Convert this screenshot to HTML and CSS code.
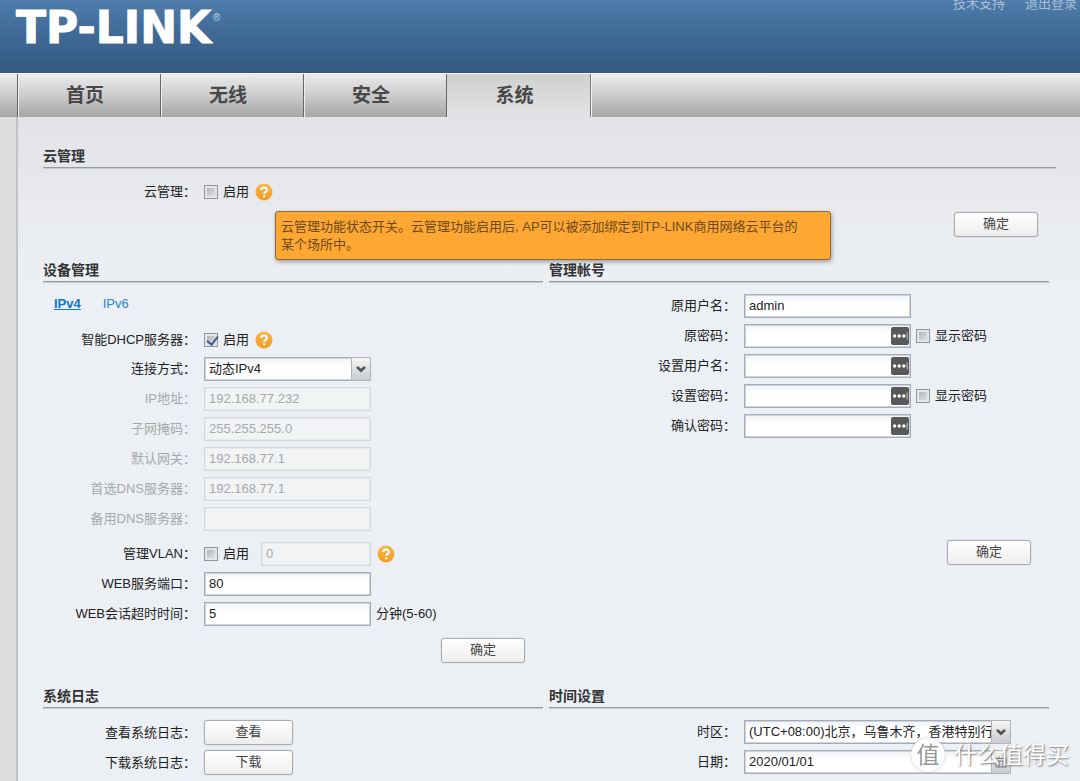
FILE: index.html
```html
<!DOCTYPE html>
<html lang="zh-CN">
<head>
<meta charset="utf-8">
<title>TP-LINK</title>
<link rel="stylesheet" href="styles.css">
</head>
<body>
<svg class="defs" width="0" height="0" aria-hidden="true">
  <defs>
    <linearGradient id="orange" x1="0" y1="0" x2="0" y2="1"><stop offset="0" stop-color="#f8b84e"/><stop offset="1" stop-color="#f59a1c"/></linearGradient>
    <symbol id="help" viewBox="0 0 18 18"><circle cx="9" cy="9" r="8.5" fill="url(#orange)"/><path d="M6.2 7.1C6.2 3.6 11.9 3.7 11.9 6.9C11.9 8.9 9.2 8.8 9.2 11" fill="none" stroke="#fff" stroke-width="2"/><rect x="8.1" y="12.2" width="2.2" height="2.2" fill="#fff"/></symbol>
    <symbol id="arrow" viewBox="0 0 10 7"><path d="M0.5 0.5H2.5L5 2.8L7.5 0.5H9.5V2.2L5 6.5L0.5 2.2Z" fill="#505358"/></symbol>
    <symbol id="key" viewBox="0 0 18 18"><rect width="18" height="18" rx="2" fill="#58585a"/><circle cx="3.6" cy="9" r="1.7" fill="#fff"/><circle cx="8.2" cy="9" r="1.7" fill="#fff"/><circle cx="12.8" cy="9" r="1.7" fill="#fff"/><path d="M16.2 5.5V12.5" stroke="#aaa" stroke-width="1.4"/></symbol>
  </defs>
</svg>
<header class="header">
  <div class="logo">TP-LINK<sup>®</sup></div>
  <div class="links"><a href="#">技术支持</a><a href="#">退出登录</a></div>
</header>
<nav class="nav">
  <a href="#">首页</a><a href="#">无线</a><a href="#">安全</a><a href="#" class="active">系统</a>
</nav>
<main class="content">
  <section class="cloud">
    <h2>云管理</h2>
    <div class="row check-row first-check">
      <span class="label">云管理：</span>
      <div class="controls"><input type="checkbox" id="cloud"><label for="cloud">启用</label>
        <span class="help-wrap"><svg class="help"><use href="#help"/></svg><span class="tip" role="tooltip">云管理功能状态开关。云管理功能启用后, AP可以被添加绑定到TP-LINK商用网络云平台的<br>某个场所中。</span></span></div>
    </div>
    <button class="btn confirm cloud-ok">确定</button>
  </section>

  <div class="columns">
    <section>
      <h2>设备管理</h2>
      <div class="ip-tabs"><a href="#" class="current">IPv4</a><a href="#">IPv6</a></div>
      <div class="rows">
        <div class="row check-row"><span class="label">智能DHCP服务器：</span><div class="controls"><input type="checkbox" id="dhcp" checked><label for="dhcp">启用</label><svg class="help"><use href="#help"/></svg></div></div>
        <div class="row"><label class="label" for="mode">连接方式：</label><div class="controls"><span class="select"><select id="mode"><option>动态IPv4</option></select><span class="drop"><svg><use href="#arrow"/></svg></span></span></div></div>
        <div class="row off"><label class="label" for="ip">IP地址：</label><div class="controls"><input class="field" id="ip" value="192.168.77.232" disabled></div></div>
        <div class="row off"><label class="label" for="mask">子网掩码：</label><div class="controls"><input class="field" id="mask" value="255.255.255.0" disabled></div></div>
        <div class="row off"><label class="label" for="gw">默认网关：</label><div class="controls"><input class="field" id="gw" value="192.168.77.1" disabled></div></div>
        <div class="row off"><label class="label" for="dns1">首选DNS服务器：</label><div class="controls"><input class="field" id="dns1" value="192.168.77.1" disabled></div></div>
        <div class="row off"><label class="label" for="dns2">备用DNS服务器：</label><div class="controls"><input class="field" id="dns2" disabled></div></div>
        <div class="row vlan"><span class="label">管理VLAN：</span><div class="controls"><input type="checkbox" id="vlan"><label for="vlan">启用</label><input class="field short" value="0" aria-label="VLAN" disabled><svg class="help"><use href="#help"/></svg></div></div>
        <div class="row"><label class="label" for="port">WEB服务端口：</label><div class="controls"><input class="field" id="port" value="80"></div></div>
        <div class="row"><label class="label" for="timeout">WEB会话超时时间：</label><div class="controls"><input class="field" id="timeout" value="5"><span class="unit">分钟(5-60)</span></div></div>
      </div>
      <button class="btn confirm device-ok">确定</button>
    </section>

    <section class="wide">
      <h2>管理帐号</h2>
      <div class="rows">
        <div class="row"><label class="label" for="user">原用户名：</label><div class="controls"><input class="field" id="user" value="admin"></div></div>
        <div class="row"><label class="label" for="pw">原密码：</label><div class="controls"><span class="secret"><input class="field" type="password" id="pw"><svg><use href="#key"/></svg></span><input type="checkbox" id="show1"><label for="show1">显示密码</label></div></div>
        <div class="row"><label class="label" for="newuser">设置用户名：</label><div class="controls"><span class="secret"><input class="field" id="newuser"><svg><use href="#key"/></svg></span></div></div>
        <div class="row"><label class="label" for="newpw">设置密码：</label><div class="controls"><span class="secret"><input class="field" type="password" id="newpw"><svg><use href="#key"/></svg></span><input type="checkbox" id="show2"><label for="show2">显示密码</label></div></div>
        <div class="row"><label class="label" for="again">确认密码：</label><div class="controls"><span class="secret"><input class="field" type="password" id="again"><svg><use href="#key"/></svg></span></div></div>
      </div>
      <button class="btn confirm account-ok">确定</button>
    </section>

    <section>
      <h2>系统日志</h2>
      <div class="rows">
        <div class="row"><span class="label">查看系统日志：</span><div class="controls"><button class="btn log">查看</button></div></div>
        <div class="row"><span class="label">下载系统日志：</span><div class="controls"><button class="btn log">下载</button></div></div>
      </div>
    </section>

    <section class="wide">
      <h2>时间设置</h2>
      <div class="rows">
        <div class="row"><label class="label" for="zone">时区：</label><div class="controls"><span class="select long"><select id="zone"><option>(UTC+08:00)北京，乌鲁木齐，香港特别行政区</option></select><span class="drop"><svg><use href="#arrow"/></svg></span></span></div></div>
        <div class="row"><label class="label" for="date">日期：</label><div class="controls"><span class="select long"><input class="field" id="date" value="2020/01/01"><span class="drop"><svg class="cal" viewBox="0 0 12 12"><path d="M1 2.5H11V11H1ZM1 5H11M4 0.5V3M8 0.5V3M4 5V11M8 5V11" fill="none" stroke="#777"/></svg></span></span></div></div>
      </div>
    </section>
  </div>
</main>
<div class="watermark"><span class="badge">值</span><span>什么值得买</span></div>
</body>
</html>
```
FILE: styles.css
```css
* { box-sizing: border-box; }
html, body { height: 100%; }
body {
  margin: 0;
  display: flex;
  flex-direction: column;
  position: relative;
  overflow: hidden;
  background: #dcdddf;
  color: #222;
  font: 13px/18px "Liberation Sans", "Noto Sans CJK SC", sans-serif;
}
input, select, button { font: inherit; color: inherit; margin: 0; }
.defs { position: absolute; }

.header {
  flex: none;
  height: 73px;
  display: flex;
  justify-content: space-between;
  align-items: flex-start;
  padding: 0 3px 0 16px;
  background: linear-gradient(#4f7dad, #406a97 45%, #34597f);
}
.logo {
  display: flex;
  padding-top: 4px;
  color: #fff;
  font: bold 44px/48px "DejaVu Sans", sans-serif;
  -webkit-text-stroke: 1px #fff;
}
.logo sup {
  font: 10px/28px "Liberation Sans", sans-serif;
  color: #c5d5e5;
  -webkit-text-stroke: 0;
  margin-left: 2px;
}
.links { display: flex; gap: 20px; line-height: 8px; }
.links a { color: #a9bfd5; text-decoration: none; }

.nav {
  flex: none;
  height: 44px;
  display: flex;
  padding-left: 17px;
  border-top: 1px solid #f8f8f8;
  background: linear-gradient(#ebebeb, #cfcfcf 45%, #a6a6a6);
}
.nav a {
  width: 143px;
  padding-right: 8px;
  border-left: 1px solid #666;
  box-shadow: inset 1px 0 #eee;
  color: #484848;
  font-size: 19px;
  font-weight: bold;
  line-height: 43px;
  text-align: center;
  text-decoration: none;
}
.nav .active {
  width: 145px;
  border-right: 1px solid #777;
  box-shadow: 1px 0 #f5f5f5;
  background: linear-gradient(#d0d0cf, #e3e3e7);
}

.content {
  flex: 1;
  margin-left: 16px;
  padding: 28px 24px 0 25px;
  border-left: 2px solid #c1c3c7;
  background: linear-gradient(#e3e3e7, #ecf0f4 170px);
}
h2 {
  margin: 0;
  border-bottom: 1px solid #999ba0;
  box-shadow: 0 1px #c8cacf;
  color: #333;
  font-size: 14px;
  line-height: 22px;
}
.cloud { display: flex; flex-direction: column; padding-bottom: 22px; }
.columns {
  display: grid;
  grid-template-columns: 1fr 1fr;
  gap: 22px 6px;
  padding-right: 7px;
}
.rows { display: grid; gap: 6px; margin-top: 12px; }
.row {
  display: grid;
  grid-template-columns: 153px 1fr;
  gap: 8px;
  align-items: center;
  height: 24px;
}
.wide .row { grid-template-columns: 187px 1fr; }
.check-row { height: 22px; }
.first-check { margin-top: 13px; }
.label { text-align: right; white-space: nowrap; }
.off .label { color: #a5a8ab; }
.controls { display: flex; align-items: center; }
.vlan { margin-top: 5px; }

.ip-tabs { display: flex; gap: 22px; padding: 13px 0 4px 11px; }
.ip-tabs a { color: #2b82d2; text-decoration: none; }
.ip-tabs .current { color: #1272cc; font-weight: bold; text-decoration: underline; }

.field, select {
  width: 167px;
  height: 24px;
  padding: 0 4px 1px;
  border: 1px solid #a6abb8;
  border-radius: 0;
  background: linear-gradient(#f1f3f6, #fff 9px);
  box-shadow: inset 0 0 0 1px #d0d4dc;
}
.field:disabled {
  border-color: #d5d9de;
  background: #f1f3f5;
  box-shadow: inset 0 0 0 1px #e6e9ec;
  color: #a5a8ab;
}
.short { width: 110px; margin-left: 12px; }
.unit { margin-left: 5px; }
input[type="checkbox"] {
  appearance: none;
  width: 14px;
  height: 14px;
  margin-right: 5px;
  border: 1px solid #92959a;
  background: linear-gradient(135deg, #a6a9ad, #ececee);
  box-shadow: inset 0 0 0 2px #e3e6e9;
}
input[type="checkbox"]:checked::after {
  content: "";
  display: block;
  width: 5px;
  height: 9px;
  margin: 0 0 0 4px;
  border: solid #3f5f98;
  border-width: 0 2px 2px 0;
  transform: rotate(38deg);
}
.help { width: 18px; height: 18px; margin-left: 6px; display: block; }
.help-wrap { position: relative; }
.tip {
  position: absolute;
  top: 28px;
  left: 26px;
  z-index: 1;
  width: 556px;
  padding: 6px 5px 5px;
  border: 1px solid #8c6a3c;
  border-radius: 3px;
  background: #fea733;
  box-shadow: 1px 2px 4px #0005;
  color: #6b4a1c;
}

.select { position: relative; width: 167px; height: 24px; }
.select select, .select .field { width: 100%; padding-right: 19px; }
.long { width: 267px; }
select { appearance: none; }
.drop {
  position: absolute;
  top: 0;
  right: 0;
  width: 20px;
  height: 24px;
  display: flex;
  align-items: center;
  justify-content: center;
  border: 1px solid #b0b3bb;
  background: linear-gradient(#f5f5f5, #c9cbcf);
  pointer-events: none;
}
.drop svg { width: 10px; height: 7px; }
.drop .cal { width: 12px; height: 12px; }
.secret { position: relative; height: 24px; margin-right: 5px; }
.secret .field { padding-right: 22px; }
.secret svg { position: absolute; top: 3px; right: 2px; width: 18px; height: 18px; }

.btn {
  display: block;
  width: 84px;
  height: 25px;
  padding: 0 0 2px;
  border: 1px solid #a9abae;
  border-radius: 3px;
  background: linear-gradient(#fff, #ededee);
  box-shadow: 0 0 1px #999;
  color: #444;
}
.log { width: 89px; }
.confirm { margin-left: auto; margin-right: 18px; }
.cloud-ok { margin-top: 9px; }
.device-ok { margin-top: 12px; }
.account-ok { margin-top: 102px; }

.watermark {
  position: absolute;
  right: 11px;
  bottom: 9px;
  display: flex;
  align-items: center;
  gap: 9px;
  color: #fff;
  font-size: 23px;
  line-height: 34px;
  text-shadow: 1px 1px 2px #777;
  pointer-events: none;
}
.badge {
  width: 34px;
  border-radius: 50%;
  background: #fff;
  box-shadow: 0 0 2px #aaa;
  color: #999;
  text-align: center;
  text-shadow: none;
}
```
